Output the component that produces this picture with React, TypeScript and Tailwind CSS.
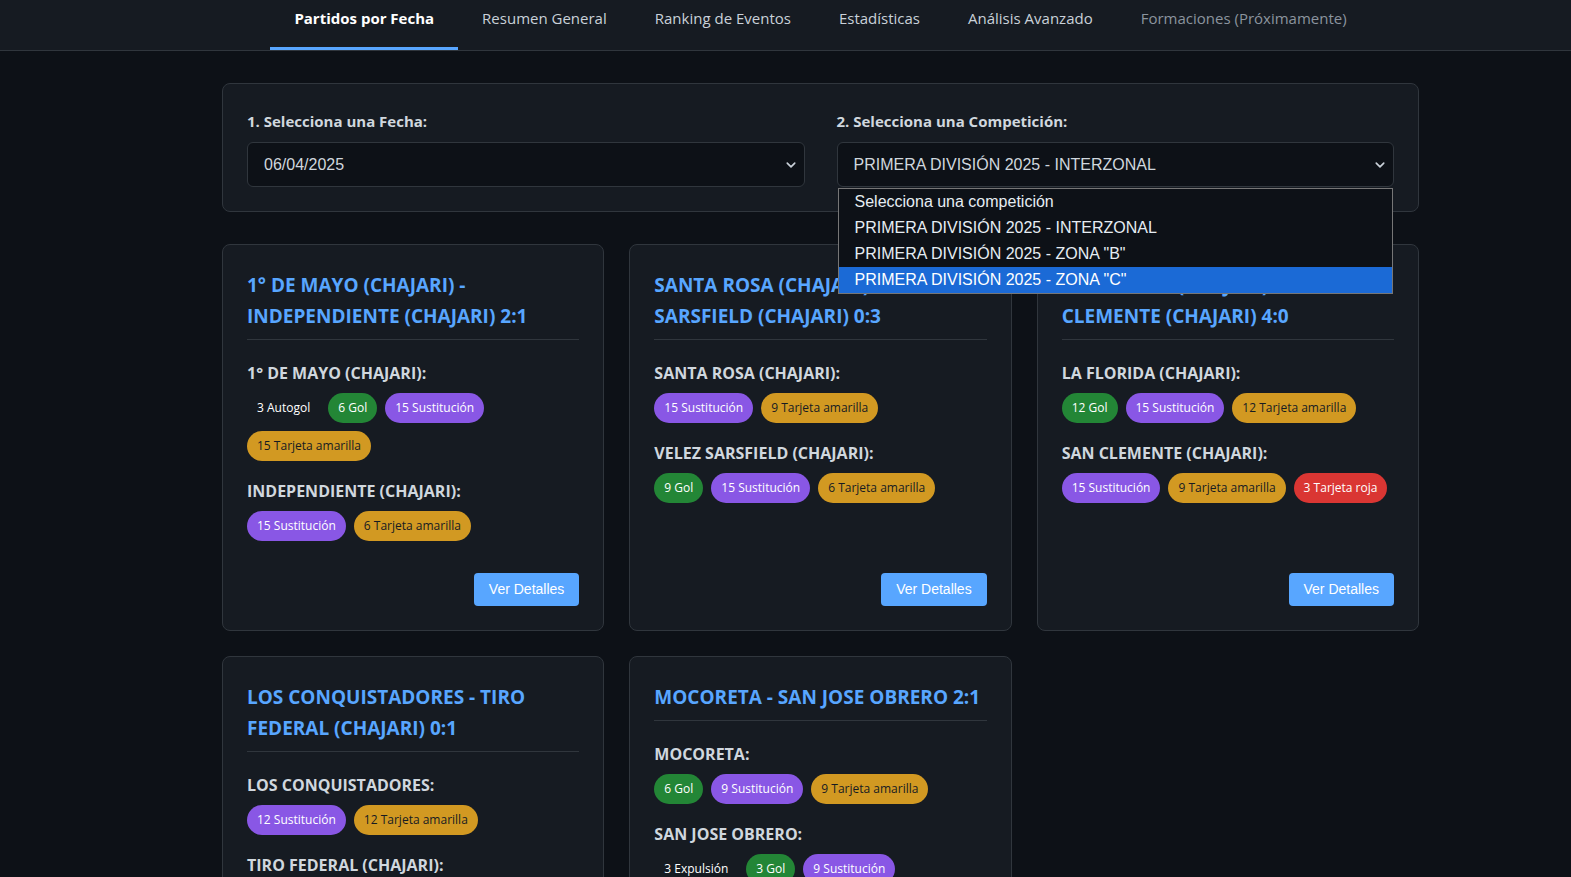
import React from "react";

type Ev = { n: number; t: string };

const kinds: Record<string, string> = {
  Gol: "bg-[#238636] text-white",
  "Sustitución": "bg-[#8957e5] text-white",
  "Tarjeta amarilla": "bg-[#d29922] text-[#161b22]",
  "Tarjeta roja": "bg-[#da3633] text-white",
  Autogol: "bg-transparent text-white",
  "Expulsión": "bg-transparent text-white",
};

type Match = { title: string; teams: { name: string; events: Ev[] }[] };

const matches: Match[] = [
  {
    title: "1° DE MAYO (CHAJARI) - INDEPENDIENTE (CHAJARI) 2:1",
    teams: [
      {
        name: "1° DE MAYO (CHAJARI):",
        events: [
          { n: 3, t: "Autogol" },
          { n: 6, t: "Gol" },
          { n: 15, t: "Sustitución" },
          { n: 15, t: "Tarjeta amarilla" },
        ],
      },
      {
        name: "INDEPENDIENTE (CHAJARI):",
        events: [
          { n: 15, t: "Sustitución" },
          { n: 6, t: "Tarjeta amarilla" },
        ],
      },
    ],
  },
  {
    title: "SANTA ROSA (CHAJARI) - VELEZ SARSFIELD (CHAJARI) 0:3",
    teams: [
      {
        name: "SANTA ROSA (CHAJARI):",
        events: [
          { n: 15, t: "Sustitución" },
          { n: 9, t: "Tarjeta amarilla" },
        ],
      },
      {
        name: "VELEZ SARSFIELD (CHAJARI):",
        events: [
          { n: 9, t: "Gol" },
          { n: 15, t: "Sustitución" },
          { n: 6, t: "Tarjeta amarilla" },
        ],
      },
    ],
  },
  {
    title: "LA FLORIDA (CHAJARI) - SAN CLEMENTE (CHAJARI) 4:0",
    teams: [
      {
        name: "LA FLORIDA (CHAJARI):",
        events: [
          { n: 12, t: "Gol" },
          { n: 15, t: "Sustitución" },
          { n: 12, t: "Tarjeta amarilla" },
        ],
      },
      {
        name: "SAN CLEMENTE (CHAJARI):",
        events: [
          { n: 15, t: "Sustitución" },
          { n: 9, t: "Tarjeta amarilla" },
          { n: 3, t: "Tarjeta roja" },
        ],
      },
    ],
  },
  {
    title: "LOS CONQUISTADORES - TIRO FEDERAL (CHAJARI) 0:1",
    teams: [
      {
        name: "LOS CONQUISTADORES:",
        events: [
          { n: 12, t: "Sustitución" },
          { n: 12, t: "Tarjeta amarilla" },
        ],
      },
      {
        name: "TIRO FEDERAL (CHAJARI):",
        events: [
          { n: 3, t: "Gol" },
          { n: 12, t: "Sustitución" },
          { n: 9, t: "Tarjeta amarilla" },
        ],
      },
    ],
  },
  {
    title: "MOCORETA - SAN JOSE OBRERO 2:1",
    teams: [
      {
        name: "MOCORETA:",
        events: [
          { n: 6, t: "Gol" },
          { n: 9, t: "Sustitución" },
          { n: 9, t: "Tarjeta amarilla" },
        ],
      },
      {
        name: "SAN JOSE OBRERO:",
        events: [
          { n: 3, t: "Expulsión" },
          { n: 3, t: "Gol" },
          { n: 9, t: "Sustitución" },
        ],
      },
    ],
  },
];

const tabs = [
  { l: "Partidos por Fecha", active: true },
  { l: "Resumen General" },
  { l: "Ranking de Eventos" },
  { l: "Estadísticas" },
  { l: "Análisis Avanzado" },
  { l: "Formaciones (Próximamente)", disabled: true },
];

const Chevron = () => (
  <svg width="10" height="10" viewBox="0 0 16 16" className="shrink-0">
    <path d="M2 5l6 6 6-6" fill="none" stroke="#c9d1d9" strokeWidth="2.6" strokeLinecap="round" strokeLinejoin="round" />
  </svg>
);

function Card({ m }: { m: Match }) {
  return (
    <div className="flex flex-col rounded-lg border border-[#30363d] bg-[#161b22] px-6 pb-6 pt-[25px]">
      <h3 className="border-b border-[#30363d] pb-[7px] text-[19px] font-bold leading-[31px] text-[#58a6ff]">
        {m.title}
      </h3>
      {m.teams.map((t, i) => (
        <div key={i} className={i === 0 ? "mt-[21px]" : "mt-[18px]"}>
          <div className="text-[16px] font-bold leading-6 text-[#d0d7de]">{t.name}</div>
          <div className="mt-2 flex flex-wrap gap-2">
            {t.events.map((e, j) => (
              <span
                key={j}
                className={`flex h-[30px] items-center rounded-full px-[10px] text-[12px] ${kinds[e.t]}`}
              >
                {e.n} {e.t}
              </span>
            ))}
          </div>
        </div>
      ))}
      <div className="mt-auto flex justify-end pt-8">
        <button className="h-[33px] rounded-[4px] bg-[#58a6ff] px-[15px] text-[14px] text-white [font-family:'Liberation_Sans',Arial,sans-serif]">
          Ver Detalles
        </button>
      </div>
    </div>
  );
}

export default function App() {
  return (
    <div className="min-h-screen bg-[#0d1117] text-[#c9d1d9] [font-family:'Open_Sans','Noto_Sans',sans-serif]">
      <nav className="h-[51px] border-b border-[#30363d] bg-[#161b22]">
        <div className="ml-[222px] flex w-[1197px] justify-center">
          {tabs.map((t, i) => (
            <div
              key={i}
              className={`flex h-[50px] items-start border-b-[3px] px-6 pt-[8px] text-[15px] leading-5 ${
                t.active
                  ? "border-[#58a6ff] font-bold text-white"
                  : t.disabled
                  ? "border-transparent text-[#8b949e]"
                  : "border-transparent text-[#c9d1d9]"
              }`}
            >
              {t.l}
            </div>
          ))}
        </div>
      </nav>
      <main className="ml-[222px] w-[1197px] pt-8">
        <div className="mb-8 grid grid-cols-2 gap-8 rounded-lg border border-[#30363d] bg-[#161b22] px-6 pb-6 pt-[26px]">
          <div>
            <div className="mb-[10px] text-[15px] font-bold leading-[22px] text-[#d0d7de]">1. Selecciona una Fecha:</div>
            <div className="flex h-[45px] items-center justify-between rounded-md border border-[#30363d] bg-[#0d1117] pl-4 pr-2 text-[16px] text-[#d0d7de] [font-family:'Liberation_Sans',Arial,sans-serif]">
              <span>06/04/2025</span>
              <Chevron />
            </div>
          </div>
          <div className="relative">
            <div className="mb-[10px] text-[15px] font-bold leading-[22px] text-[#d0d7de]">2. Selecciona una Competición:</div>
            <div className="flex h-[45px] items-center justify-between rounded-md border border-[#30363d] bg-[#0d1117] pl-4 pr-2 text-[16px] text-[#d0d7de] [font-family:'Liberation_Sans',Arial,sans-serif]">
              <span>PRIMERA DIVISIÓN 2025 - INTERZONAL</span>
              <Chevron />
            </div>
            <div className="absolute left-px right-px top-[78px] z-10 border border-[#767676] bg-[#0d1117] text-[16px] text-[#e6edf3] [font-family:'Liberation_Sans',Arial,sans-serif]">
              {[
                "Selecciona una competición",
                "PRIMERA DIVISIÓN 2025 - INTERZONAL",
                'PRIMERA DIVISIÓN 2025 - ZONA "B"',
                'PRIMERA DIVISIÓN 2025 - ZONA "C"',
              ].map((o, i) => (
                <div
                  key={i}
                  className={`flex h-[26px] items-center pl-4 ${i === 3 ? "bg-[#1b6ad6] text-white" : ""}`}
                >
                  {o}
                </div>
              ))}
            </div>
          </div>
        </div>
        <div className="grid grid-cols-3 gap-[25px] pb-10">
          {matches.map((m, i) => (
            <Card key={i} m={m} />
          ))}
        </div>
      </main>
    </div>
  );
}
